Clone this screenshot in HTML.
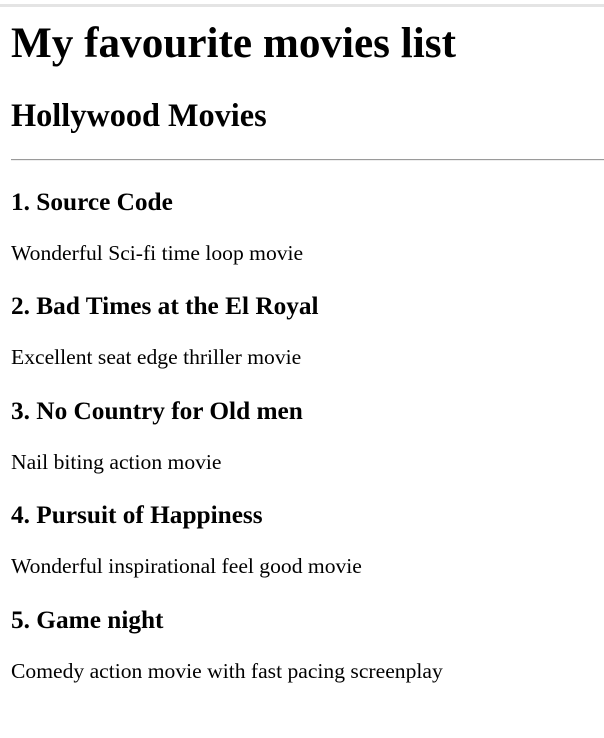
<!DOCTYPE html>
<html><head><meta charset="utf-8"><style>
html,body{margin:0;padding:0;background:#fff;width:604px;height:738px;overflow:hidden;position:relative}
div{position:absolute;left:11px;font-family:"Liberation Serif",serif;line-height:1;white-space:nowrap;color:#000}
.h3{font-size:25.3px;font-weight:bold}
.p{font-size:21.6px}
</style></head><body>
<div style="left:0;top:4px;width:604px;height:3px;background:#e4e4e4"></div>
<div style="top:21.5px;font-size:43.2px;font-weight:bold">My favourite movies list</div>
<div style="top:98.5px;font-size:32.3px;font-weight:bold">Hollywood Movies</div>
<div style="top:159px;width:593px;height:0;border-top:1px solid #9a9a9a;border-bottom:1px solid #eee"></div>
<div class="h3" style="top:189.5px">1. Source Code</div>
<div class="p" style="top:242.6px">Wonderful Sci-fi time loop movie</div>
<div class="h3" style="top:294px">2. Bad Times at the El Royal</div>
<div class="p" style="top:347.1px">Excellent seat edge thriller movie</div>
<div class="h3" style="top:398.5px">3. No Country for Old men</div>
<div class="p" style="top:451.6px">Nail biting action movie</div>
<div class="h3" style="top:503px">4. Pursuit of Happiness</div>
<div class="p" style="top:556.1px">Wonderful inspirational feel good movie</div>
<div class="h3" style="top:607.5px">5. Game night</div>
<div class="p" style="top:660.6px">Comedy action movie with fast pacing screenplay</div>
</body></html>
